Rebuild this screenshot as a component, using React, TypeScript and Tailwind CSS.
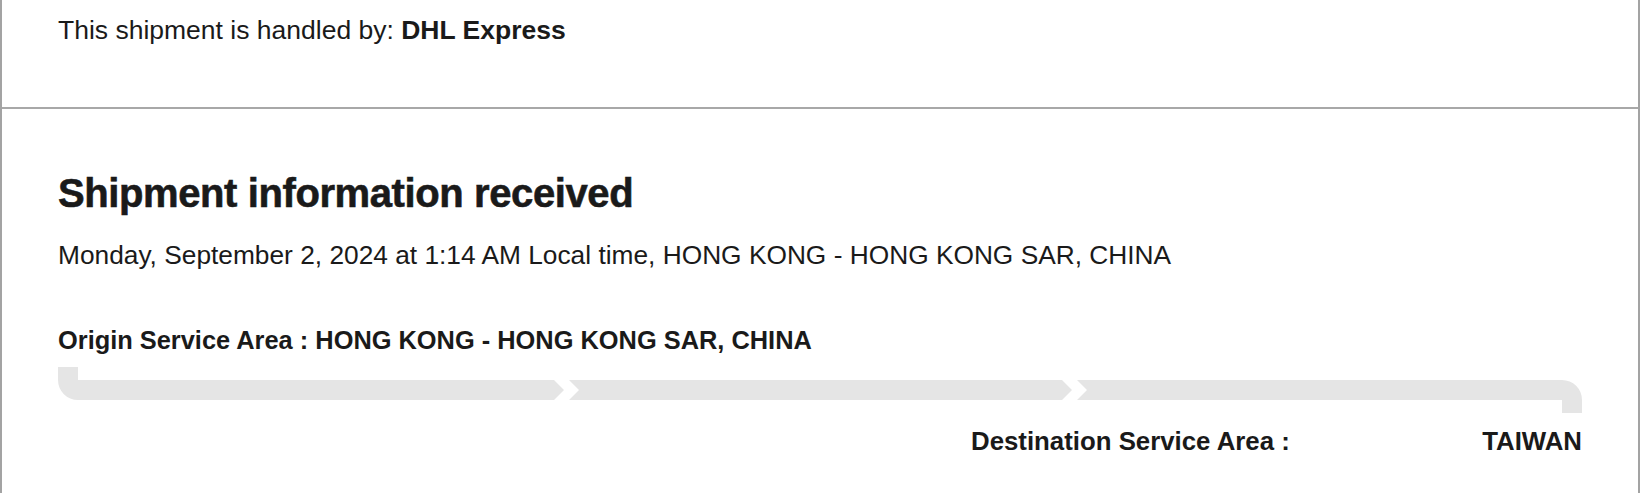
export default function App() {
  return (
    <div className="w-[1640px] h-[493px] overflow-hidden bg-white font-['Liberation_Sans',Arial,sans-serif] text-[#1a1a1a]">
      <div className="border-x-2 border-[#a3a3a3]">
        {/* carrier */}
        <section className="h-[107px] px-[56px] pt-[11px] text-[26.5px] leading-[39px]">
          This shipment is handled by: <b className="font-bold">DHL Express</b>
        </section>

        {/* status */}
        <section className="border-t-2 border-[#a8a8a8] px-[56px] pt-[60px] pb-10">
          <h2 className="text-[40px] leading-[48px] font-bold tracking-[-0.4px] [-webkit-text-stroke:0.6px_#1a1a1a]">
            Shipment information received
          </h2>
          <p className="mt-[19px] text-[26.3px] leading-[39px]">
            Monday, September 2, 2024 at 1:14 AM Local time, HONG KONG - HONG KONG SAR, CHINA
          </p>
          <p className="mt-[46px] text-[25.4px] leading-[38px] font-bold">
            Origin Service Area : HONG KONG - HONG KONG SAR, CHINA
          </p>

          <svg className="mt-[6px] block" width="1524" height="48" viewBox="0 0 1524 48">
            <g fill="#e5e5e5">
              <path d="M0 2H20V15H496L506 25L496 35H20A20 20 0 0 1 0 15Z" />
              <path d="M511 15H1004L1014 25L1004 35H511L521 25Z" />
              <path d="M1019 15H1504A20 20 0 0 1 1524 35V48H1504V35H1019L1029 25Z" />
            </g>
          </svg>

          <div className="mt-[9px] flex justify-end">
            <div className="w-[611px] flex justify-between text-[25.8px] leading-[38px] font-bold">
              <span>Destination Service Area :</span>
              <span>TAIWAN</span>
            </div>
          </div>
        </section>
      </div>
    </div>
  );
}
